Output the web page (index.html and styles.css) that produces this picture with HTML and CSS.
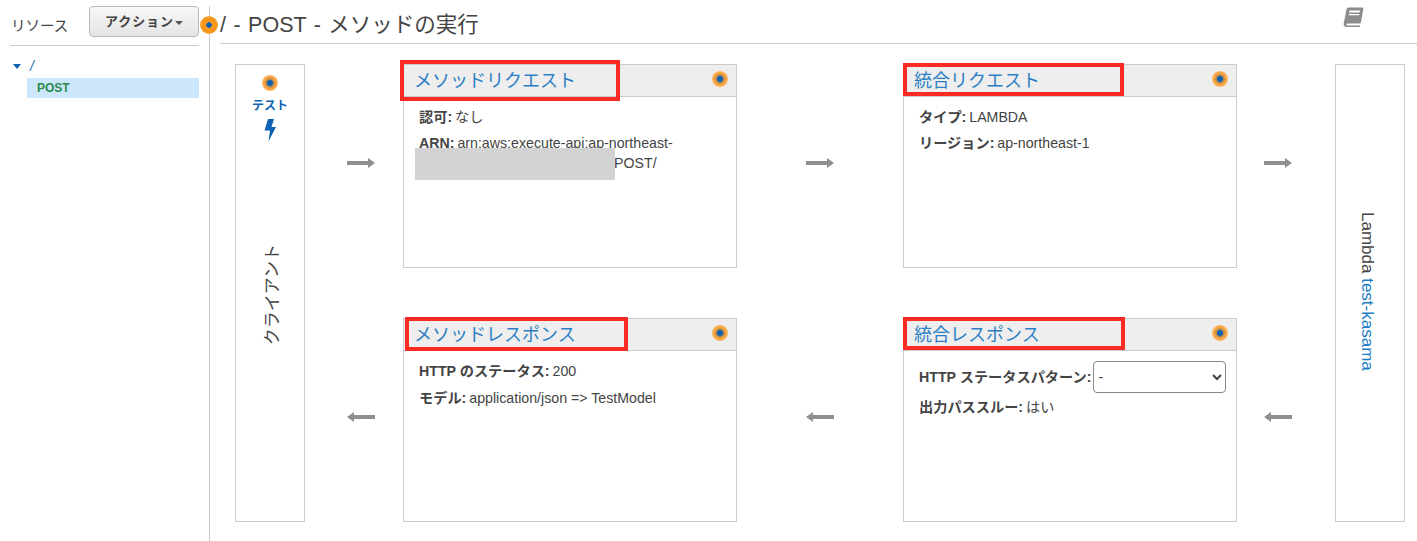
FILE: index.html
```html
<!DOCTYPE html>
<html lang="ja">
<head>
<meta charset="utf-8">
<title>メソッドの実行</title>
<link rel="stylesheet" href="styles.css">
</head>
<body>
<div class="page">
  <aside class="sidebar">
    <div class="side-head">
      <span class="side-title">リソース</span>
      <button class="action-btn">アクション<span class="caret"></span></button>
    </div>
    <div class="tree-root"><span class="tree-arrow"></span><a class="tree-link">/</a></div>
    <div class="tree-method">POST</div>
    <span class="dot dot-big"></span>
  </aside>
  <main class="main">
    <header class="title-bar">
      <h1 class="page-title">/ - POST - メソッドの実行</h1>
      <svg class="book" width="21" height="20" viewBox="0 0 21 20"><path d="M5.500.5H19c1 0 1.500.7 1.300 1.600L18 15c-.2 1-.8 1.500-1.800 1.500H4.500c-1.300 0-1.500 2 0 2H17V20H4C1.500 20 .3 18.500.7 16.500L3.500 2.300C3.800 1.100 4.500.5 5.500.5z" fill="#8c8c8c"/><path d="M6.500 3.500h10.500l-.4 2H6.100zM5.900 7h10.500l-.2 1.200H5.700z" fill="#fff"/></svg>
    </header>
    <section class="diagram">
      <div class="side-col col-client client">
        <span class="dot"></span>
        <span class="test-label">テスト</span>
        <svg class="bolt" width="14" height="24" viewBox="0 0 14 24"><path d="M5 1h6L8.500 9H13L5.500 23.500 7 12.500H1.500z" fill="#0a62b0"/></svg>
        <span class="vert-text client-text">クライアント</span>
      </div>

      <div class="arrow-cell col-a1 row-top">
        <svg class="arrow" width="28" height="12" viewBox="0 0 28 12"><path d="M0 4h21V1l7 5-7 5V8H0z" fill="#8f8f8f"/></svg>
      </div>

      <article class="card col-left row-top">
        <div class="card-head"><a class="card-title">メソッドリクエスト</a><span class="dot"></span></div>
        <div class="card-body">
          <p class="row"><b>認可:</b> なし</p>
          <p class="row arn"><b>ARN:</b> arn:aws:execute-api:ap-northeast-<br><span class="arn-gap"></span>POST/</p>
        </div>
        <span class="redact"></span>
        <span class="mark mark-a"></span>
      </article>

      <div class="arrow-cell col-a2 row-top">
        <svg class="arrow" width="28" height="12" viewBox="0 0 28 12"><path d="M0 4h21V1l7 5-7 5V8H0z" fill="#8f8f8f"/></svg>
      </div>

      <article class="card col-right row-top">
        <div class="card-head"><a class="card-title">統合リクエスト</a><span class="dot"></span></div>
        <div class="card-body">
          <p class="row"><b>タイプ:</b> LAMBDA</p>
          <p class="row arn"><b>リージョン:</b> ap-northeast-1</p>
        </div>
        <span class="mark mark-b"></span>
      </article>

      <div class="arrow-cell col-a3 row-top">
        <svg class="arrow" width="28" height="12" viewBox="0 0 28 12"><path d="M0 4h21V1l7 5-7 5V8H0z" fill="#8f8f8f"/></svg>
      </div>

      <div class="side-col col-lambda lambda">
        <span class="vert-text">Lambda <a class="lambda-link">test-kasama</a></span>
      </div>

      <div class="arrow-cell col-a1 row-bottom">
        <svg class="arrow" width="28" height="12" viewBox="0 0 28 12"><path d="M28 4H7V1L0 6l7 5V8h21z" fill="#8f8f8f"/></svg>
      </div>

      <article class="card col-left row-bottom">
        <div class="card-head"><a class="card-title">メソッドレスポンス</a><span class="dot"></span></div>
        <div class="card-body">
          <p class="row"><b>HTTP のステータス:</b> 200</p>
          <p class="row arn model"><b>モデル:</b> application/json =&gt; TestModel</p>
        </div>
        <span class="mark mark-c"></span>
      </article>

      <div class="arrow-cell col-a2 row-bottom">
        <svg class="arrow" width="28" height="12" viewBox="0 0 28 12"><path d="M28 4H7V1L0 6l7 5V8h21z" fill="#8f8f8f"/></svg>
      </div>

      <article class="card col-right row-bottom">
        <div class="card-head"><a class="card-title">統合レスポンス</a><span class="dot"></span></div>
        <div class="card-body">
          <div class="row select-row"><b>HTTP ステータスパターン:</b>
            <select class="pattern"><option>-</option></select>
          </div>
          <p class="row pass"><b>出力パススルー:</b> はい</p>
        </div>
        <span class="mark mark-d"></span>
      </article>

      <div class="arrow-cell col-a3 row-bottom">
        <svg class="arrow" width="28" height="12" viewBox="0 0 28 12"><path d="M28 4H7V1L0 6l7 5V8h21z" fill="#8f8f8f"/></svg>
      </div>
    </section>
  </main>
</div>
</body>
</html>
```
FILE: styles.css
```css
* { box-sizing: border-box; }
html, body { margin: 0; height: 100%; }
body {
  font-family: "Liberation Sans", "Noto Sans CJK JP", sans-serif;
  font-size: 14px;
  color: #444;
  background: #fff;
  overflow: hidden;
}
.page { display: flex; height: 541px; }

/* sidebar */
.sidebar {
  position: relative;
  width: 210px;
  flex: none;
  margin-top: 6px;
  padding: 0 10px;
  border-right: 1px solid #c8c8c8;
}
.side-head {
  display: flex;
  justify-content: space-between;
  align-items: center;
  height: 40px;
  padding: 0 0 8px 1px;
  border-bottom: 1px solid #ccc;
  width: 189px;
}
.side-title { font-size: 14.5px; color: #444; padding-top: 5px; }
.action-btn {
  width: 110px;
  height: 31px;
  padding: 0 0 2px;
  border: 1px solid #bbb;
  border-radius: 4px;
  background: linear-gradient(#f8f8f8, #e4e4e4);
  font: bold 13px "Liberation Sans", "Noto Sans CJK JP", sans-serif;
  color: #444;
  letter-spacing: .9px;
}
.caret {
  display: inline-block;
  margin-left: 1px;
  vertical-align: middle;
  border: 4px solid transparent;
  border-top: 4px solid #555;
  border-bottom: 0;
}
.tree-root {
  display: flex;
  align-items: center;
  height: 20px;
  margin-top: 10px;
  padding-left: 3px;
}
.tree-arrow {
  width: 0;
  height: 0;
  border: 4.5px solid transparent;
  border-top: 5px solid #0a62b0;
  border-bottom: 0;
}
.tree-link { margin-left: 9px; color: #1a6fb8; font-style: italic; }
.tree-method {
  height: 20px;
  margin-left: 17px;
  margin-top: 2px;
  padding-left: 10px;
  line-height: 20px;
  background: #cce6fb;
  color: #2e8b4f;
  font-size: 12px;
  font-weight: bold;
}
.dot {
  display: block;
  flex: none;
  width: 16px;
  height: 16px;
  border-radius: 50%;
  background: radial-gradient(circle, #0a62b0 0 2.5px, #b88a50 3.5px 4.5px, #f9a541 5px 6.5px, #fbc07a 8px);
}
.dot-big {
  position: absolute;
  top: 10px;
  right: -9px;
  width: 18px;
  height: 18px;
  background: radial-gradient(circle, #0a62b0 0 2.5px, #f8971d 3px 8px, #fbb158 9px);
}

/* main */
.main { flex: 1; min-width: 0; padding: 0 0 0 10px; }
.title-bar {
  display: flex;
  justify-content: space-between;
  height: 44px;
  border-bottom: 1px solid #ccc;
}
.page-title {
  margin: 0;
  padding-top: 13px;
  font-size: 21.5px;
  word-spacing: 1.5px;
  line-height: 24px;
  font-weight: normal;
  color: #444;
}
.book { margin: 7px 53px 0 0; }
.diagram {
  display: grid;
  grid-template-columns: 70px 98px 334px 166px 334px 98px 70px;
  grid-template-rows: 204px 50px 204px;
  margin: 20px 0 0 15px;
  width: 1170px;
}
.col-client { grid-column: 1; }
.col-a1 { grid-column: 2; padding-left: 14px; }
.col-left { grid-column: 3; }
.col-a2 { grid-column: 4; }
.col-right { grid-column: 5; }
.col-a3 { grid-column: 6; padding-right: 16px; }
.col-lambda { grid-column: 7; }
.row-top { grid-row: 1; }
.row-bottom { grid-row: 3; }
.side-col {
  grid-row: 1 / 4;
  display: flex;
  flex-direction: column;
  align-items: center;
  border: 1px solid #ccc;
}
.client { padding-top: 10px; }
.test-label { margin-top: 7px; font-size: 12px; font-weight: bold; color: #0a62b0; line-height: 17px; }
.bolt { margin-top: 3px; }
.vert-text {
  writing-mode: vertical-rl;
  text-orientation: sideways;
  font-size: 17px;
  color: #444;
  white-space: nowrap;
}
.client-text { margin-top: 102px; transform: rotate(180deg); }
.lambda { justify-content: center; padding: 0 7px 3px 0; }
.lambda-link { color: #1a7cc5; }
.arrow-cell {
  display: flex;
  justify-content: center;
  padding-top: 93px;
}
.arrow { display: block; }
.card {
  position: relative;
  border: 1px solid #ccc;
}
.card-head {
  display: flex;
  justify-content: space-between;
  align-items: center;
  height: 32px;
  padding: 0 8px 3px 10px;
  background: #eee;
  border-bottom: 1px solid #ccc;
}
.card-title { font-size: 18px; color: #2b7fc4; }
.card-body { padding: 10px 15px; }
.row { margin: 0; line-height: 20px; color: #444; font-size: 14.2px; }
.row b { margin-right: -1px; }
.arn { margin-top: 6px; }
.model { margin-top: 7px; }
.arn-gap { display: inline-block; width: 195px; }
.select-row { display: flex; align-items: center; gap: 3px; white-space: nowrap; }
.pass { margin-top: 4px; }
.pattern {
  flex: none;
  width: 133px;
  height: 32px;
  padding: 0;
  border: 1px solid #888;
  border-radius: 4px;
  background-color: #fff;
  font: 14px "Liberation Sans", sans-serif;
  color: #444;
}
.redact {
  position: absolute;
  left: 11px;
  top: 83px;
  width: 200px;
  height: 32px;
  background: #d3d3d3;
}
.mark { position: absolute; border: 4px solid #fb2a23; }
.mark-a { left: -4px; top: -5px; width: 220px; height: 41px; }
.mark-b { left: -1px; top: -2px; width: 221px; height: 33px; }
.mark-c { left: 1px; top: -2px; width: 223px; height: 34px; }
.mark-d { left: -1px; top: -2px; width: 222px; height: 33px; }
```
